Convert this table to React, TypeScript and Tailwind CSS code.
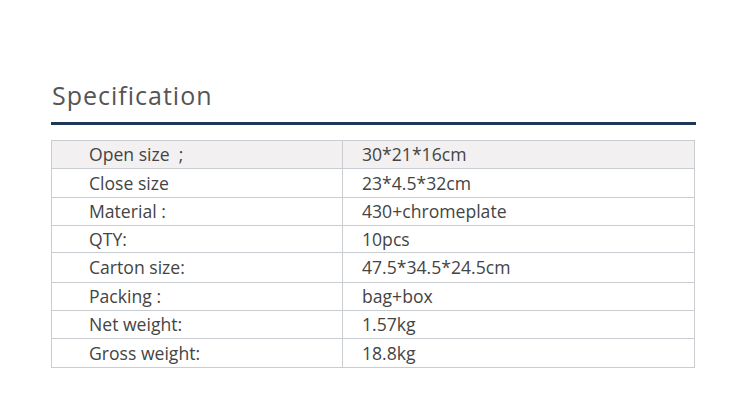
import React from "react";

const rows: { k: string; v: string; h: string; bg?: boolean }[] = [
  { k: "Open size  ;", v: "30*21*16cm", h: "h-[28px]", bg: true },
  { k: "Close size", v: "23*4.5*32cm", h: "h-[29px]" },
  { k: "Material :", v: "430+chromeplate", h: "h-[28px]" },
  { k: "QTY:", v: "10pcs", h: "h-[27px]" },
  { k: "Carton size:", v: "47.5*34.5*24.5cm", h: "h-[30px]" },
  { k: "Packing :", v: "bag+box", h: "h-[28px]" },
  { k: "Net weight:", v: "1.57kg", h: "h-[28px]" },
  { k: "Gross weight:", v: "18.8kg", h: "h-[29px]" },
];

export default function App() {
  return (
    <div className="w-[750px] h-[407px] bg-white pl-[51px] pt-[76px] text-[#444]" style={{ fontFamily: '"Open Sans", "Noto Sans", sans-serif' }}>
      <div className="w-[645px]">
        <div className="text-[25px] leading-[38px] tracking-[1px] text-[#555] pl-[1px]">Specification</div>
        <div className="mt-[8px] h-[3px] bg-[#1f3656]" />
        <div className="mt-[15px] w-[644px] border-t border-l border-[#c9ccd1]">
          {rows.map((r, i) => (
            <div key={i} className={`flex ${r.h} ${r.bg ? "bg-[#f2f0f0]" : ""} border-b border-[#c9ccd1]`}>
              <div className="w-[291px] border-r border-[#c9ccd1] pl-[37px] flex items-center text-[17.6px]">
                <span className="whitespace-pre">{r.k}</span>
              </div>
              <div className="flex-1 border-r border-[#c9ccd1] pl-[19px] flex items-center text-[17.6px]">
                {r.v}
              </div>
            </div>
          ))}
        </div>
      </div>
    </div>
  );
}
